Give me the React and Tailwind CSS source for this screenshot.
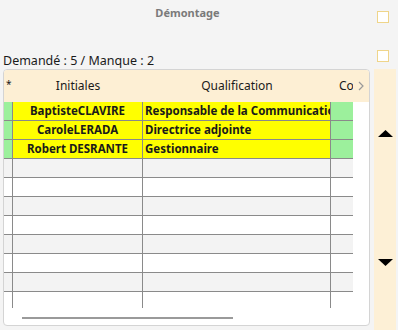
const people = [
  { name: "BaptisteCLAVIRE", role: "Responsable de la Communication" },
  { name: "CaroleLERADA", role: "Directrice adjointe" },
  { name: "Robert DESRANTE", role: "Gestionnaire" },
];

const emptyRows = [0, 1, 2, 3, 4, 5, 6];

export default function App() {
  return (
    <div className="w-[398px] h-[330px] bg-[#f4f4f4] flex overflow-hidden font-['Noto_Sans',sans-serif] text-[#1a1a1a]">
      {/* Main column */}
      <div className="w-[372px] pl-[3px] flex flex-col">
        <div className="h-[26px] flex items-center justify-center text-[11px] font-bold text-[#7a7a7a]">
          Démontage
        </div>
        <div className="h-[43px] flex items-end pb-[2px] text-[12.5px] leading-none">
          Demandé : 5 / Manque : 2
        </div>

        {/* Table panel */}
        <div className="w-[367px] h-[257px] bg-white border border-[#d4d4d4] rounded-[4px] overflow-hidden flex flex-col">
          {/* Header */}
          <div className="h-[32px] shrink-0 bg-[#fdefd4] flex items-center text-[12px]">
            <div className="w-[9px] pl-[2px] -mt-[3px] text-[10px]">*</div>
            <div className="w-[130px] text-center">Initiales</div>
            <div className="w-[188px] text-center">Qualification</div>
            <div className="w-[22px] pl-[8px] overflow-hidden whitespace-nowrap">Commentaire</div>
            <svg width="8" height="10" viewBox="0 0 8 10" className="ml-[4px]">
              <path d="M2 1 L6 5 L2 9" fill="none" stroke="#9a9a9a" strokeWidth="1.2" />
            </svg>
          </div>

          {/* Rows */}
          <div className="flex flex-col w-[349px]">
            {people.map((p) => (
              <div key={p.name} className="h-[19px] flex border-b border-[#8a8a8a] text-[11.5px] font-bold leading-[18px]">
                <div className="w-[9px] bg-[#9cf09c] border-r border-[#8a8a8a]"></div>
                <div className="w-[130px] bg-[#ffff00] border-r border-[#8a8a8a] text-center whitespace-nowrap overflow-hidden">
                  {p.name}
                </div>
                <div className="w-[188px] bg-[#ffff00] border-r border-[#8a8a8a] pl-[2px] whitespace-nowrap overflow-hidden">
                  {p.role}
                </div>
                <div className="w-[22px] bg-[#9cf09c]"></div>
              </div>
            ))}
            {emptyRows.map((i) => (
              <div
                key={i}
                className={
                  "h-[19px] flex border-b border-[#8a8a8a] " +
                  (i % 2 === 0 ? "bg-[#f3f3f3]" : "bg-white")
                }
              >
                <div className="w-[9px] border-r border-[#8a8a8a]"></div>
                <div className="w-[130px] border-r border-[#8a8a8a]"></div>
                <div className="w-[188px] border-r border-[#8a8a8a]"></div>
                <div className="w-[22px]"></div>
              </div>
            ))}
            <div className="h-[16px] flex bg-white">
              <div className="w-[9px] border-r border-[#8a8a8a]"></div>
              <div className="w-[130px] border-r border-[#8a8a8a]"></div>
              <div className="w-[188px] border-r border-[#8a8a8a]"></div>
              <div className="w-[22px]"></div>
            </div>
          </div>

          {/* Horizontal scrollbar */}
          <div className="mt-[9px] ml-[18px] w-[211px] h-[2px] bg-[#9a9a9a]"></div>
        </div>
      </div>

      {/* Right column */}
      <div className="flex-1 flex flex-col">
        <div className="mt-[11px] ml-[5px] w-[12px] h-[12px] bg-white border border-[#efd58a]"></div>
        <div className="mt-[27px] ml-[5px] w-[12px] h-[12px] bg-white border border-[#efd58a]"></div>
        <div className="mt-[7px] ml-[2px] w-[22px] flex-1 bg-[#fdf0d6] flex flex-col items-center">
          <svg width="15" height="7" viewBox="0 0 15 7" className="mt-[61px]">
            <path d="M0 7 L7.5 0 L15 7 Z" fill="#000" />
          </svg>
          <svg width="15" height="7" viewBox="0 0 15 7" className="mt-[122px]">
            <path d="M0 0 L15 0 L7.5 7 Z" fill="#000" />
          </svg>
        </div>
      </div>
    </div>
  );
}
